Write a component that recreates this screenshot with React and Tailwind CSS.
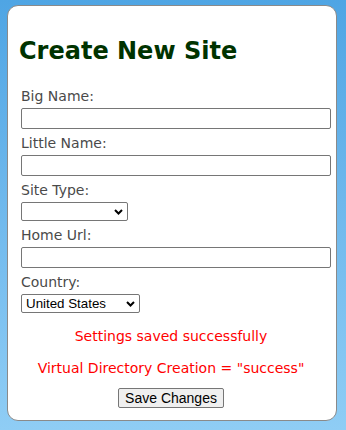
import React from "react";

export default function App() {
  return (
    <div className="w-[346px] h-[430px] bg-gradient-to-b from-[#4fa5e4] to-[#8fcdf5] pt-[5px] pl-[7px]">
      <div className="w-[330px] h-[416px] bg-white border border-[#8a8a8a] rounded-[11px] font-['DejaVu_Sans',sans-serif]">
        {/* Title */}
        <h1 className="pl-[11px] pt-[30px] text-[24px] leading-[30px] font-bold text-[#003300]">
          Create New Site
        </h1>

        <form className="pl-[13px] pt-[20px] text-[14px] text-[#4a4a4a]">
          <label className="block leading-[20px]">Big Name:</label>
          <input className="block w-[310px] h-[21px] mt-[2px] border border-[#767676] rounded-[2px]" />

          <label className="block leading-[20px] mt-[4px]">Little Name:</label>
          <input className="block w-[310px] h-[21px] mt-[2px] border border-[#767676] rounded-[2px]" />

          <label className="block leading-[20px] mt-[4px]">Site Type:</label>
          <div className="flex items-center justify-end w-[107px] h-[19px] mt-[2px] border border-[#767676] rounded-[2px] pr-[4px]">
            <svg width="9" height="6" viewBox="0 0 9 6">
              <path d="M1 1l3.5 3.5L8 1" stroke="#000" strokeWidth="2" fill="none" />
            </svg>
          </div>

          <label className="block leading-[20px] mt-[4px]">Home Url:</label>
          <input className="block w-[310px] h-[21px] mt-[2px] border border-[#767676] rounded-[2px]" />

          <label className="block leading-[20px] mt-[4px]">Country:</label>
          <div className="flex items-center justify-between w-[119px] h-[19px] mt-[2px] border border-[#767676] rounded-[2px] pl-[4px] pr-[4px] font-['Liberation_Sans',sans-serif] text-[13.33px] text-black">
            <span>United States</span>
            <svg width="9" height="6" viewBox="0 0 9 6">
              <path d="M1 1l3.5 3.5L8 1" stroke="#000" strokeWidth="2" fill="none" />
            </svg>
          </div>
        </form>

        <div className="flex flex-col items-center pr-[2px] text-[14px] text-[#ff0000]">
          <p className="mt-[13px] leading-[20px]">Settings saved successfully</p>
          <p className="mt-[12px] leading-[20px]">Virtual Directory Creation = "success"</p>
          <button className="mt-[10px] h-[20px] px-[6px] bg-[#efefef] border border-[#767676] rounded-[2px] font-['Liberation_Sans',sans-serif] text-[14px] text-black leading-none">
            Save Changes
          </button>
        </div>
      </div>
    </div>
  );
}
